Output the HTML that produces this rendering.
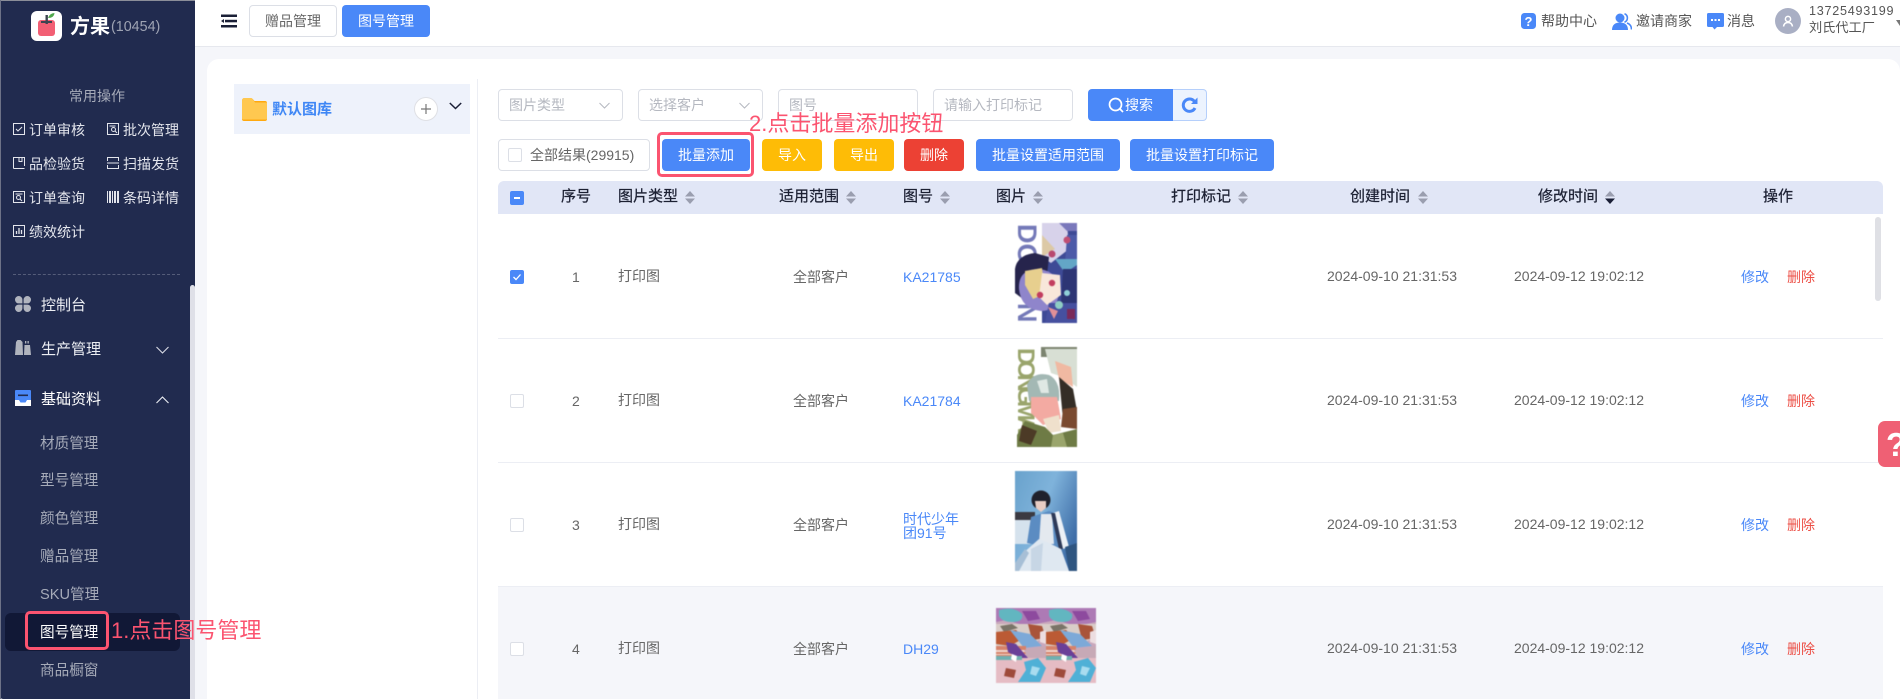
<!DOCTYPE html>
<html lang="zh-CN"><head><meta charset="utf-8"><title>图号管理</title>
<style>
*{box-sizing:border-box;margin:0;padding:0}
html,body{width:1900px;height:699px;overflow:hidden;background:#fff}
body{position:relative;font-family:"Liberation Sans","Noto Sans CJK SC",sans-serif;font-size:14px;color:#666}
.a{position:absolute}
.t{position:absolute;white-space:nowrap;line-height:20px;height:20px}
.box{position:absolute;border:1px solid #dcdfe6;border-radius:4px;background:#fff}
.btn{position:absolute;height:32px;line-height:32px;text-align:center;color:#fff;border-radius:4px;font-size:14px;white-space:nowrap}
.blue{background:#4a88f8}.yel{background:#febc06}.red{background:#ec4134}
.ph{color:#b5b8c0}
.cb{position:absolute;width:14px;height:14px;border:1px solid #dcdfe6;border-radius:2px;background:#fff}
.sc{color:#e3e5ec;font-size:14px}
.sub{color:#a6abb9;font-size:14.6px;left:40px;width:62px}
.th{color:#1c2033;font-size:15px;-webkit-text-stroke:.25px #1c2033}
.ln{color:#4a88f8}.del{color:#ec4f46}
.sep{position:absolute;left:498px;width:1385px;height:1px;background:#eceef4}
.ann{position:absolute;color:#fb5470;font-size:22px;line-height:30px;height:30px;white-space:nowrap}
svg{position:absolute;display:block}
.im{filter:blur(.45px)}
</style></head><body>

<!-- sidebar -->
<div class="a" style="left:0;top:0;width:195px;height:699px;background:#212b4f;border-radius:3px 0 0 3px"></div>
<div class="a" style="left:190px;top:285px;width:5px;height:414px;background:#dfe0e8;border-radius:3px 3px 0 0"></div>
<div class="a" style="left:0;top:0;width:195px;height:1px;background:#8b8e99"></div>
<div class="a" style="left:0;top:0;width:1px;height:699px;background:#6d7287"></div>

<div class="a" style="left:31px;top:11px;width:31px;height:30px;background:#fff;border-radius:6px"></div>
<svg style="left:31px;top:11px" width="31" height="30" viewBox="0 0 31 30"><rect x="7" y="9" width="17" height="16" rx="3" fill="#f25f74"/><rect x="14.500" y="4" width="2.400" height="9" fill="#3d4450"/><rect x="10" y="10" width="11" height="2" fill="#3d4450"/><path d="M17 7 Q19 2 23.500 2 Q23 7 17 7Z" fill="#4fa84c"/></svg>
<div class="t" style="left:70px;top:16px;color:#fff;font-size:20px;font-weight:700;line-height:22px;height:22px">方果</div>
<div class="t" style="left:111px;top:16px;color:#9ea3b3;font-size:14.300px;line-height:22px;height:22px">(10454)</div>

<div class="t" style="left:69px;top:86px;color:#a6abb9;font-size:14px">常用操作</div>

<div class="t sc" style="left:29px;top:120px">订单审核</div>
<div class="t sc" style="left:123px;top:120px">批次管理</div>
<div class="t sc" style="left:29px;top:154px">品检验货</div>
<div class="t sc" style="left:123px;top:154px">扫描发货</div>
<div class="t sc" style="left:29px;top:188px">订单查询</div>
<div class="t sc" style="left:123px;top:188px">条码详情</div>
<div class="t sc" style="left:29px;top:222px">绩效统计</div>
<svg style="left:13px;top:123px" width="12" height="12" viewBox="0 0 12 12" fill="none" stroke="#e3e5ec"><rect x=".5" y=".5" width="11" height="11"/><path d="M3 6l2 2 4-4"/></svg>
<svg style="left:107px;top:123px" width="12" height="12" viewBox="0 0 12 12" fill="none" stroke="#e3e5ec"><rect x=".5" y=".5" width="11" height="11"/><circle cx="6.500" cy="6.500" r="2"/><path d="M2.500 3h6M8 8l2 2"/></svg>
<svg style="left:13px;top:157px" width="12" height="12" viewBox="0 0 12 12" fill="none" stroke="#e3e5ec"><path d="M.5 11.500V.5h11v8.500M.5 11.500h11M6 .5v4h3v-4"/></svg>
<svg style="left:107px;top:157px" width="12" height="12" viewBox="0 0 12 12" fill="none" stroke="#e3e5ec"><path d="M.5 4V.5h11V4M.5 8v3.500h11V8M0 6h12"/></svg>
<svg style="left:13px;top:191px" width="12" height="12" viewBox="0 0 12 12" fill="none" stroke="#e3e5ec"><rect x=".5" y=".5" width="11" height="11"/><circle cx="5.500" cy="6.500" r="2"/><path d="M2.500 3h7M7 8l2 2"/></svg>
<svg style="left:107px;top:191px" width="12" height="12" viewBox="0 0 12 12" fill="#e3e5ec"><rect x="0" width="1" height="12"/><rect x="2" width="2" height="12"/><rect x="5" width="1" height="12"/><rect x="7" width="2" height="12"/><rect x="10" width="2" height="12"/></svg>
<svg style="left:13px;top:225px" width="12" height="12" viewBox="0 0 12 12" fill="none" stroke="#e3e5ec"><rect x=".5" y=".5" width="11" height="11"/><path d="M3.500 9V6M6 9V3M8.500 9V5" stroke-width="1.300"/></svg>

<div class="a" style="left:13px;top:274px;width:167px;border-top:1px dashed #555d7a"></div>

<svg style="left:15px;top:296px" width="16" height="16" viewBox="0 0 16 16" fill="#b0b4be"><path d="M0 3.700A3.700 3.700 0 0 1 7.400 3.700V7.400H3.700A3.700 3.700 0 0 1 0 3.700Z"/><path d="M16 3.700A3.700 3.700 0 0 0 8.600 3.700V7.400H12.300A3.700 3.700 0 0 0 16 3.700Z"/><path d="M0 12.300A3.700 3.700 0 0 0 7.400 12.300V8.600H3.700A3.700 3.700 0 0 0 0 12.300Z"/><path d="M16 12.300A3.700 3.700 0 0 1 8.600 12.300V8.600H12.300A3.700 3.700 0 0 1 16 12.300Z"/></svg>
<div class="t" style="left:41px;top:296px;color:#eceef3;font-size:15px">控制台</div>

<svg style="left:15px;top:340px" width="16" height="15" viewBox="0 0 16 15" fill="#b0b4be"><path d="M0 15 1 2 2.500 0h3l2 2 .5 13Z"/><path d="M9 15 9.500 5h5.500L16 15Z"/><rect x="10" y="1" width="1.300" height="2.500"/><rect x="12.500" y="1" width="1.300" height="2.500"/></svg>
<div class="t" style="left:41px;top:340px;color:#eceef3;font-size:15px">生产管理</div>
<svg style="left:156px;top:346px" width="13" height="8" viewBox="0 0 13 8" fill="none" stroke="#d9dce5" stroke-width="1.100"><path d="M.5 1l6 6 6-6"/></svg>

<svg style="left:15px;top:390px" width="16" height="16" viewBox="0 0 16 16"><rect width="16" height="16" rx="1" fill="#4a88f8"/><path d="M0 10h4l1.500 2.500h5L12 10h4v6H0Z" fill="#fff"/><rect x="3" y="4.500" width="10" height="1.600" fill="#212b4f"/></svg>
<div class="t" style="left:41px;top:390px;color:#fff;font-size:15px">基础资料</div>
<svg style="left:156px;top:396px" width="13" height="8" viewBox="0 0 13 8" fill="none" stroke="#eceef3" stroke-width="1.100"><path d="M.5 7l6-6 6 6"/></svg>

<div class="t sub" style="top:434px">材质管理</div>
<div class="t sub" style="top:471px">型号管理</div>
<div class="t sub" style="top:509px">颜色管理</div>
<div class="t sub" style="top:547px">赠品管理</div>
<div class="t sub" style="top:585px">SKU管理</div>
<div class="a" style="left:5px;top:613px;width:175px;height:38px;background:#111836;border-radius:6px"></div>
<div class="t sub" style="top:623px;color:#fff">图号管理</div>
<div class="t sub" style="top:661px">商品橱窗</div>

<!-- main bg -->
<div class="a" style="left:195px;top:46px;width:1705px;height:653px;background:#f5f6fa"></div>
<div class="a" style="left:195px;top:46px;width:1705px;height:1px;background:#e6e8ee"></div>
<div class="a" style="left:207px;top:59px;width:1693px;height:640px;background:#fff;border-radius:12px 12px 0 0"></div>

<!-- topbar -->
<svg style="left:221px;top:14px" width="16" height="14" viewBox="0 0 16 14" fill="#1a1f36"><rect x="0" y=".5" width="16" height="2.500"/><rect x="4" y="5.800" width="12" height="2.500"/><rect x="0" y="11" width="16" height="2.500"/><path d="M0 7l3-2v4Z"/></svg>
<div class="btn" style="left:249px;top:5px;width:88px;background:#fff;border:1px solid #dcdfe6;color:#666;line-height:30px">赠品管理</div>
<div class="btn blue" style="left:342px;top:5px;width:88px">图号管理</div>

<svg style="left:1521px;top:13px" width="15" height="16" viewBox="0 0 15 16"><rect width="15" height="16" rx="3.500" fill="#4a88f8"/><text x="7.500" y="13" font-size="13" font-weight="700" fill="#fff" text-anchor="middle" font-family="Liberation Sans">?</text></svg>
<div class="t" style="left:1541px;top:11px;color:#555">帮助中心</div>
<svg style="left:1612px;top:13px" width="20" height="17" viewBox="0 0 20 17"><circle cx="8" cy="5" r="4.500" fill="#4a88f8"/><path d="M0 17c0-5 3-7.500 8-7.500s8 2.500 8 7.500Z" fill="#4a88f8"/><path d="M12.500 .8a4.500 4.500 0 0 1 0 8.400M15 10c3 1 4.500 3.500 4.500 6.500" fill="none" stroke="#4a88f8" stroke-width="1.600"/></svg>
<div class="t" style="left:1636px;top:11px;color:#555">邀请商家</div>
<svg style="left:1707px;top:13px" width="17" height="17" viewBox="0 0 17 17"><path d="M1.500 0h14A1.500 1.500 0 0 1 17 1.500v11a1.500 1.500 0 0 1-1.500 1.500H10l-2.500 2.500L5.500 14h-4A1.500 1.500 0 0 1 0 12.500v-11A1.500 1.500 0 0 1 1.500 0Z" fill="#4a88f8"/><g fill="#fff"><rect x="4" y="6" width="2" height="2"/><rect x="7.500" y="6" width="2" height="2"/><rect x="11" y="6" width="2" height="2"/></g></svg>
<div class="t" style="left:1727px;top:11px;color:#555">消息</div>
<div class="a" style="left:1775px;top:8px;width:26px;height:26px;border-radius:50%;background:#a9afc4"></div>
<svg style="left:1782px;top:15px" width="12" height="12" viewBox="0 0 12 12" fill="none" stroke="#fff" stroke-width="1.500"><circle cx="6" cy="4" r="2.600"/><path d="M1.500 11.500C2 8.500 3.500 7.500 6 7.500s4 1 4.500 4"/></svg>
<div class="t" style="left:1809px;top:1px;color:#555;font-size:12.600px;letter-spacing:.75px">13725493199</div>
<div class="t" style="left:1809px;top:18px;color:#555;font-size:13.200px">刘氏代工厂</div>
<svg style="left:1896px;top:20px" width="4" height="6" viewBox="0 0 4 6"><path d="M0 0h8L4 6Z" fill="#777"/></svg>

<!-- left library panel -->
<div class="a" style="left:234px;top:84px;width:236px;height:50px;background:#eef2fb"></div>
<div class="a" style="left:477px;top:79px;width:1px;height:620px;background:#eceef4"></div>
<svg style="left:242px;top:98px" width="25" height="23" viewBox="0 0 25 23"><path d="M2.500 0h6c1 0 1.800 .5 2.400 1.200L12.500 3H23a2 2 0 0 1 2 2v16a2 2 0 0 1-2 2H2a2 2 0 0 1-2-2V2.500A2.500 2.500 0 0 1 2.500 0Z" fill="#ffa90f"/><path d="M2.500 0h6c1 0 1.800 .5 2.400 1.200L13 4.500h11.500a.5 .5 0 0 1 .5 .5v15.500a1 1 0 0 1-1 1H1a1 1 0 0 1-1-1V2.500A2.500 2.500 0 0 1 2.500 0Z" fill="#ffc850"/></svg>
<div class="t" style="left:272px;top:100px;color:#3f87f5;font-size:15px;font-weight:700">默认图库</div>
<div class="a" style="left:414px;top:97px;width:24px;height:24px;border-radius:50%;background:#fff;border:1px solid #dfe0e5"></div>
<svg style="left:420px;top:103px" width="12" height="12" viewBox="0 0 12 12" stroke="#777" stroke-width="1.200"><path d="M6 1v10M1 6h10"/></svg>
<svg style="left:449px;top:102px" width="13" height="8" viewBox="0 0 13 8" fill="none" stroke="#1a1f36" stroke-width="1.500"><path d="M.8 1l5.700 5.500L12.200 1"/></svg>

<!-- filters -->
<div class="box" style="left:498px;top:89px;width:125px;height:32px"></div>
<div class="t ph" style="left:509px;top:95px">图片类型</div>
<svg style="left:599px;top:102px" width="11" height="7" viewBox="0 0 11 7" fill="none" stroke="#b5b8c0"><path d="M.5 1l5 5 5-5"/></svg>
<div class="box" style="left:638px;top:89px;width:125px;height:32px"></div>
<div class="t ph" style="left:649px;top:95px">选择客户</div>
<svg style="left:739px;top:102px" width="11" height="7" viewBox="0 0 11 7" fill="none" stroke="#b5b8c0"><path d="M.5 1l5 5 5-5"/></svg>
<div class="box" style="left:778px;top:89px;width:140px;height:32px"></div>
<div class="t ph" style="left:789px;top:95px">图号</div>
<div class="box" style="left:933px;top:89px;width:140px;height:32px"></div>
<div class="t ph" style="left:944px;top:95px">请输入打印标记</div>
<div class="a" style="left:1088px;top:89px;width:86px;height:32px;background:#4a88f8;border-radius:4px 0 0 4px"></div>
<svg style="left:1108px;top:97px" width="16" height="16" viewBox="0 0 16 16" fill="none" stroke="#fff" stroke-width="1.700"><circle cx="7.500" cy="7.500" r="6"/><path d="M12 12l3 3"/></svg>
<div class="t" style="left:1125px;top:95px;color:#fff">搜索</div>
<div class="a" style="left:1173px;top:89px;width:34px;height:32px;background:#ecf3fe;border:1px solid #b5cffb;border-left:0;border-radius:0 4px 4px 0"></div>
<svg style="left:1181px;top:97px" width="17" height="16" viewBox="0 0 17 16" fill="none" stroke="#4a88f8" stroke-width="3"><path d="M13.500 4.500A6.200 6.200 0 1 0 14 11"/><path d="M16.500 .5v6.500h-6.500Z" fill="#4a88f8" stroke="none"/></svg>

<!-- toolbar -->
<div class="box" style="left:498px;top:139px;width:152px;height:32px"></div>
<div class="cb" style="left:508px;top:148px"></div>
<div class="t" style="left:530px;top:145px">全部结果(29915)</div>
<div class="btn blue" style="left:662px;top:139px;width:88px">批量添加</div>
<div class="btn yel" style="left:762px;top:139px;width:60px">导入</div>
<div class="btn yel" style="left:834px;top:139px;width:60px">导出</div>
<div class="btn red" style="left:904px;top:139px;width:60px">删除</div>
<div class="btn blue" style="left:976px;top:139px;width:144px">批量设置适用范围</div>
<div class="btn blue" style="left:1130px;top:139px;width:144px">批量设置打印标记</div>

<!-- table header -->
<div class="a" style="left:498px;top:181px;width:1385px;height:33px;background:#e1e6f6;border-radius:6px 6px 0 0"></div>
<div class="a" style="left:510px;top:191px;width:14px;height:14px;background:#4a88f8;border-radius:2px"></div>
<div class="a" style="left:514px;top:197px;width:6px;height:2px;background:#fff"></div>
<div class="t th" style="left:561px;top:187px">序号</div>
<div class="t th" style="left:618px;top:187px">图片类型</div>
<div class="t th" style="left:779px;top:187px">适用范围</div>
<div class="t th" style="left:903px;top:187px">图号</div>
<div class="t th" style="left:996px;top:187px">图片</div>
<div class="t th" style="left:1171px;top:187px">打印标记</div>
<div class="t th" style="left:1350px;top:187px">创建时间</div>
<div class="t th" style="left:1538px;top:187px">修改时间</div>
<div class="t th" style="left:1763px;top:187px">操作</div>
<svg style="left:685px;top:191px" width="10" height="13" viewBox="0 0 10 13" fill="#9a9eaf"><path d="M5 0l5 5.500H0Z"/><path d="M5 13L0 7.500h10Z"/></svg>
<svg style="left:846px;top:191px" width="10" height="13" viewBox="0 0 10 13" fill="#9a9eaf"><path d="M5 0l5 5.500H0Z"/><path d="M5 13L0 7.500h10Z"/></svg>
<svg style="left:940px;top:191px" width="10" height="13" viewBox="0 0 10 13" fill="#9a9eaf"><path d="M5 0l5 5.500H0Z"/><path d="M5 13L0 7.500h10Z"/></svg>
<svg style="left:1033px;top:191px" width="10" height="13" viewBox="0 0 10 13" fill="#9a9eaf"><path d="M5 0l5 5.500H0Z"/><path d="M5 13L0 7.500h10Z"/></svg>
<svg style="left:1238px;top:191px" width="10" height="13" viewBox="0 0 10 13" fill="#9a9eaf"><path d="M5 0l5 5.500H0Z"/><path d="M5 13L0 7.500h10Z"/></svg>
<svg style="left:1418px;top:191px" width="10" height="13" viewBox="0 0 10 13" fill="#9a9eaf"><path d="M5 0l5 5.500H0Z"/><path d="M5 13L0 7.500h10Z"/></svg>
<svg style="left:1605px;top:191px" width="10" height="13" viewBox="0 0 10 13"><path d="M5 0l5 5.500H0Z" fill="#9a9eaf"/><path d="M5 13L0 7.500h10Z" fill="#1a1f36"/></svg>

<!-- rows -->
<div class="a" style="left:498px;top:587px;width:1385px;height:112px;background:#f5f6fa"></div>
<div class="sep" style="top:338px"></div>
<div class="sep" style="top:462px"></div>
<div class="sep" style="top:586px"></div>

<div class="a" style="left:1875px;top:217px;width:6px;height:84px;background:#dfe0e5;border-radius:3px"></div>

<!-- row 1 -->
<div class="a" style="left:510px;top:270px;width:14px;height:14px;background:#4a88f8;border-radius:2px"></div>
<svg style="left:510px;top:270px" width="14" height="14" viewBox="0 0 14 14" fill="none" stroke="#fff" stroke-width="1.300"><path d="M3.500 7l2.500 2.500 4.500-5"/></svg>
<div class="t" style="left:572px;top:267px">1</div>
<div class="t" style="left:618px;top:266px">打印图</div>
<div class="t" style="left:793px;top:267px">全部客户</div>
<div class="t ln" style="left:903px;top:267px">KA21785</div>
<div class="t" style="left:1327px;top:266px">2024-09-10 21:31:53</div>
<div class="t" style="left:1514px;top:266px">2024-09-12 19:02:12</div>
<div class="t ln" style="left:1741px;top:267px">修改</div>
<div class="t del" style="left:1787px;top:267px">删除</div>

<!-- row 2 -->
<div class="cb" style="left:510px;top:394px"></div>
<div class="t" style="left:572px;top:391px">2</div>
<div class="t" style="left:618px;top:390px">打印图</div>
<div class="t" style="left:793px;top:391px">全部客户</div>
<div class="t ln" style="left:903px;top:391px">KA21784</div>
<div class="t" style="left:1327px;top:390px">2024-09-10 21:31:53</div>
<div class="t" style="left:1514px;top:390px">2024-09-12 19:02:12</div>
<div class="t ln" style="left:1741px;top:391px">修改</div>
<div class="t del" style="left:1787px;top:391px">删除</div>

<!-- row 3 -->
<div class="cb" style="left:510px;top:518px"></div>
<div class="t" style="left:572px;top:515px">3</div>
<div class="t" style="left:618px;top:514px">打印图</div>
<div class="t" style="left:793px;top:515px">全部客户</div>
<div class="t ln" style="left:903px;top:512px;line-height:14px;height:28px">时代少年<br>团91号</div>
<div class="t" style="left:1327px;top:514px">2024-09-10 21:31:53</div>
<div class="t" style="left:1514px;top:514px">2024-09-12 19:02:12</div>
<div class="t ln" style="left:1741px;top:515px">修改</div>
<div class="t del" style="left:1787px;top:515px">删除</div>

<!-- row 4 -->
<div class="cb" style="left:510px;top:642px"></div>
<div class="t" style="left:572px;top:639px">4</div>
<div class="t" style="left:618px;top:638px">打印图</div>
<div class="t" style="left:793px;top:639px">全部客户</div>
<div class="t ln" style="left:903px;top:639px">DH29</div>
<div class="t" style="left:1327px;top:638px">2024-09-10 21:31:53</div>
<div class="t" style="left:1514px;top:638px">2024-09-12 19:02:12</div>
<div class="t ln" style="left:1741px;top:639px">修改</div>
<div class="t del" style="left:1787px;top:639px">删除</div>

<!-- image 1 -->
<svg class="im" style="left:1015px;top:223px" width="62" height="100" viewBox="0 0 62 100">
<text transform="translate(3,1) rotate(90)" font-family="Liberation Sans" font-weight="700" font-size="27" fill="#7479b8">DO</text>
<text transform="translate(3,80) rotate(90)" font-family="Liberation Sans" font-weight="700" font-size="27" fill="#7479b8">N</text>
<rect x="27" width="35" height="100" fill="#3e4a96"/>
<path d="M27 0H52L54 26 36 40 27 34Z" fill="#d7d2ea"/>
<path d="M27 12l13 14-13 8Z" fill="#dcc9a6"/>
<path d="M44 0h18v8l-10 0Z" fill="#7a78bb"/>
<path d="M52 12h10v30H50Z" fill="#4c5aa8"/>
<circle cx="52" cy="17" r="3.500" fill="#c04f74"/>
<circle cx="37" cy="31" r="3.500" fill="#b84870"/>
<path d="M0 46Q2 32 20 30L34 34 30 70 8 76 0 70Z" fill="#26244c"/>
<path d="M4 66Q3 46 24 46 44 48 44 70 42 88 26 88 6 86 4 66Z" fill="#8f85cb"/>
<path d="M10 48l17-3 3 26-12 5-8-14Z" fill="#e7cf8e"/>
<path d="M27 50 45 52 46 72 32 82 24 74Z" fill="#f8e7da"/>
<circle cx="37" cy="60" r="3.200" fill="#c23d5f"/>
<circle cx="25" cy="72" r="3.200" fill="#c23d5f"/>
<path d="M34 80h28v20H30Z" fill="#46509f"/>
<path d="M40 36h22v6l-12 8Z" fill="#63a6c6"/>
<path d="M48 46h14v34H46Z" fill="#2d3574"/>
<circle cx="44" cy="82" r="4" fill="#8ecdc4"/><circle cx="52" cy="70" r="3" fill="#8fd0d8"/><path d="M33 84l10 4-4 8Z" fill="#e09098"/><rect x="52" y="86" width="8" height="10" fill="#7a2a5a"/>
</svg>

<!-- image 2 -->
<svg class="im" style="left:1017px;top:347px" width="60" height="100" viewBox="0 0 60 100">
<text transform="translate(1,1) rotate(90)" font-family="Liberation Sans" font-weight="700" font-size="24" fill="#9aa56c" textLength="98">DONGMAN</text>
<rect x="24" width="36" height="10" fill="#7c8470"/>
<path d="M28 2h32v38L46 30 34 26Z" fill="#d8dfd4"/>
<path d="M38 14 54 20 56 40 42 32Z" fill="#f0b9a2"/>
<path d="M10 38Q16 24 32 28 44 34 42 54H12Z" fill="#a3b8b4"/>
<path d="M20 34l10-2 2 14-8 0Z" fill="#dfe8e4"/>
<path d="M42 30 56 42 60 64 46 72Z" fill="#342d26"/>
<path d="M14 50 40 50 44 72 26 78 14 66Z" fill="#f3aaa2"/>
<path d="M26 72 42 68 44 84 32 86Z" fill="#efe0cc"/>
<path d="M46 62 60 60 60 82 44 80Z" fill="#7a4a30"/>
<path d="M0 88 8 74 28 80 36 88 60 82V100H0Z" fill="#6e7b45"/>
<path d="M5 78 20 84 14 98 2 94Z" fill="#4c3a26"/>
<path d="M36 88 46 86 50 100H34Z" fill="#9aa56c"/>
</svg>

<!-- image 3 -->
<svg class="im" style="left:1015px;top:471px" width="62" height="100" viewBox="0 0 62 100">
<defs><linearGradient id="g3" x1="0" y1="0" x2="1" y2=".6"><stop offset="0" stop-color="#69a2cc"/><stop offset=".5" stop-color="#7fb3db"/><stop offset="1" stop-color="#3f6ea8"/></linearGradient></defs>
<rect width="62" height="100" fill="url(#g3)"/>
<rect y="41" width="20" height="8" fill="#3b3a42"/>
<rect y="49" width="20" height="24" fill="#d5e2ed"/>
<path d="M16 46 34 40 46 44 50 74 30 76 12 72Z" fill="#5b8cc2"/>
<path d="M26 43h11l2 30H24Z" fill="#e4e9ef"/>
<path d="M38 42 44 40 54 76 48 78Z" fill="#edf1f6"/>
<path d="M36 42 40 42 48 78 44 78Z" fill="#2e3a58"/>
<path d="M2 100 6 84 24 68 34 72 46 78 54 100Z" fill="#dfe8f1"/>
<path d="M16 78 28 72 26 100H16Z" fill="#c7d6e5"/>
<path d="M50 76l12-4v28H54Z" fill="#2f5580"/>
<path d="M0 92l10-14 4 4L4 100H0Z" fill="#a7bfd6"/>
<circle cx="26" cy="29" r="9.500" fill="#1f212c"/>
<path d="M20 30h11v7l-5 4-5-4Z" fill="#e8cdc4"/>
</svg>

<!-- image 4 -->
<svg class="im" style="left:996px;top:608px" width="100" height="75" viewBox="0 0 100 75">
<defs><g id="tile">
<rect width="50" height="75" fill="#c9a8bc"/>
<path d="M0 0H50V14L30 18 10 12 0 14Z" fill="#ad7ab5"/>
<path d="M3 2Q18-2 26 6 28 14 16 14 6 14 3 8Z" fill="#62b6c0"/>
<path d="M26 3l14 0 4 8-12 2Z" fill="#8d4a9e"/>
<path d="M0 16H50V28L30 40 0 38Z" fill="#d9cdc8"/>
<path d="M4 18l12-2 6 4-14 4Z" fill="#7a7468"/>
<path d="M0 24 20 22 28 30 14 38 0 36Z" fill="#bb5a34"/>
<path d="M32 16 46 18 50 30 36 32Z" fill="#a9543a"/>
<path d="M14 22 34 26 46 38 28 40Z" fill="#7da9d8"/>
<path d="M44 24l6-2v14l-6-2Z" fill="#ecdde0"/>
<path d="M0 38H30V50H0Z" fill="#d6826a"/>
<path d="M0 42h30v2H0ZM0 46h30v1H0Z" fill="#efd6cc"/>
<path d="M10 34 20 36 32 50 22 50 12 44Z" fill="#6a3f98"/>
<path d="M28 42 50 38V54H34Z" fill="#c7a9b6"/>
<path d="M0 50H50V75H0Z" fill="#e5bcc4"/>
<path d="M0 48h26v4H0Z" fill="#6fb0b0"/>
<path d="M28 54 42 50 50 60 44 74H22L30 62Z" fill="#4fb0d6"/>
<path d="M36 58l8 2-4 8-6-2Z" fill="#a8dcef"/>
<path d="M10 60 20 62 18 70 8 68Z" fill="#9e4a3a"/>
<path d="M16 46l5 2-1 6-5-3Z" fill="#fff"/>
</g></defs>
<use href="#tile"/><use href="#tile" x="50"/>
</svg>

<!-- float help -->
<div class="a" style="left:1878px;top:421px;width:22px;height:46px;background:#ef6074;border-radius:7px 0 0 7px"></div>
<div class="t" style="left:1886px;top:428px;color:#fff;font-size:33px;font-weight:700;line-height:33px;height:33px">?</div>

<!-- annotations -->
<div class="a" style="left:657px;top:132px;width:97px;height:45px;border:3px solid #fb5470;border-radius:5px"></div>
<div class="a" style="left:25px;top:611px;width:84px;height:39px;border:3px solid #fb5470;border-radius:5px"></div>
<div class="ann" style="left:111px;top:616px">1.点击图号管理</div>
<div class="ann" style="left:749px;top:109px">2.点击批量添加按钮</div>
</body></html>
